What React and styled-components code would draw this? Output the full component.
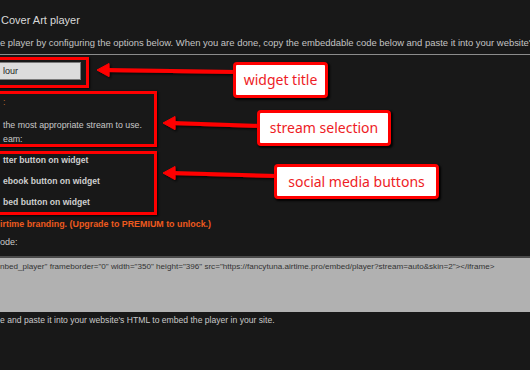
import styled, { createGlobalStyle } from "styled-components";

const GlobalStyle = createGlobalStyle`
    html, body {
        margin: 0;
        padding: 0;
        background: #181818;
        overflow: hidden;
    }
    body {
        font-family: "Liberation Sans", Arial, sans-serif;
    }
`;

const streamLines = [
    { text: ":", tone: "label", gap: 2 },
    { text: " the most appropriate stream to use.", tone: "plain", gap: 11 },
    { text: "eam:", tone: "plain", gap: 2 },
];

const socialItems = [
    "tter button on widget",
    "ebook button on widget",
    "bed button on widget",
];

const callouts = [
    { text: "widget title", left: 233, top: 62, width: 95, height: 36 },
    { text: "stream selection", left: 257, top: 110, width: 134, height: 36 },
    { text: "social media buttons", left: 274, top: 164, width: 165, height: 35 },
];

const arrows = [
    { tipX: 97, tipY: 70, endX: 236, endY: 72 },
    { tipX: 163, tipY: 123, endX: 260, endY: 126 },
    { tipX: 163, tipY: 173, endX: 276, endY: 176 },
];

const App = () => {
    const code = 'nbed_player" frameborder="0" width="350" height="396" src="https://fancytuna.airtime.pro/embed/player?stream=auto&skin=2"></iframe>';

    return (
        <Page>
            <GlobalStyle />
            <Content>
                <Title>Cover Art player</Title>
                <Intro>e player by configuring the options below. When you are done, copy the embeddable code below and paste it into your website's</Intro>
                <Rule />

                <Highlight $width={109} $height={25} $top={2}>
                    <TitleInput readOnly value="lour" />
                </Highlight>

                <Highlight $width={177} $height={50} $top={3}>
                    {streamLines.map((line, index) => (
                        <StreamLine key={index} $tone={line.tone} $gap={line.gap}>
                            {line.text}
                        </StreamLine>
                    ))}
                </Highlight>

                <Highlight $width={177} $height={58} $top={4}>
                    {socialItems.map((item) => (
                        <CheckRow key={item}>{item}</CheckRow>
                    ))}
                </Highlight>

                <Premium>irtime branding. (Upgrade to PREMIUM to unlock.)</Premium>
                <CodeLabel>ode:</CodeLabel>
                <CodeBox readOnly wrap="off" value={code} />
                <Hint>e and paste it into your website's HTML to embed the player in your site.</Hint>
            </Content>

            <Arrows width="530" height="370" viewBox="0 0 530 370">
                <defs>
                    <filter id="shade" x="-10%" y="-50%" width="130%" height="200%">
                        <feDropShadow dx="1.5" dy="1.5" stdDeviation="0.8" floodColor="#000" floodOpacity="0.8" />
                    </filter>
                </defs>
                {arrows.map((a, index) => (
                    <g key={index} filter="url(#shade)" fill="#ff0000" stroke="#ff0000">
                        <line x1={a.tipX + 9} y1={a.tipY} x2={a.endX} y2={a.endY} strokeWidth="4" strokeLinecap="round" />
                        <polygon points={`${a.tipX},${a.tipY} ${a.tipX + 12},${a.tipY - 6.5} ${a.tipX + 12},${a.tipY + 6.5}`} strokeWidth="1" strokeLinejoin="round" />
                    </g>
                ))}
            </Arrows>

            {callouts.map((c) => (
                <Callout key={c.text} style={{ left: c.left, top: c.top, width: c.width, height: c.height }}>
                    {c.text}
                </Callout>
            ))}
        </Page>
    );
};

export default App;

const Page = styled.div`
    position: relative;
    width: 530px;
    height: 370px;
    overflow: hidden;
    background: #181818;
`;

const Content = styled.div`
    display: flex;
    flex-direction: column;
    align-items: flex-start;
`;

const Title = styled.div`
    margin-top: 13px;
    padding-left: 1px;
    font-size: 11px;
    line-height: 14px;
    color: #d8d8d8;
`;

const Intro = styled.div`
    margin-top: 10px;
    font-size: 9.45px;
    line-height: 12px;
    color: #c4c4c4;
    white-space: nowrap;
`;

const Rule = styled.div`
    align-self: stretch;
    margin-top: 5px;
    height: 0;
    border-top: 1px solid #8c8c8c;
`;

const Highlight = styled.div`
    box-sizing: border-box;
    margin-top: ${props => props.$top}px;
    margin-left: -20px;
    width: ${props => props.$width}px;
    height: ${props => props.$height + 6}px;
    border: 3px solid #ff0000;
    box-shadow: 1px 1px 2px rgba(0, 0, 0, 0.9);
    display: flex;
    flex-direction: column;
    align-items: flex-start;
    padding-left: 20px;
`;

const TitleInput = styled.input`
    box-sizing: border-box;
    margin: 2px 0 0 -14px;
    width: 92px;
    height: 18px;
    padding: 0 0 0 13px;
    border: 1px solid #7a7a7a;
    background: #dcdcdc;
    color: #222;
    font-family: "Liberation Sans", Arial, sans-serif;
    font-size: 9px;
    outline: none;
`;

const StreamLine = styled.div`
    margin-top: ${props => props.$gap}px;
    font-size: 8.8px;
    line-height: 12px;
    white-space: nowrap;
    color: ${props => props.$tone === 'label' ? '#b8652a' : '#c8c8c8'};
`;

const CheckRow = styled.div`
    font-size: 8.6px;
    font-weight: 700;
    line-height: 12px;
    color: #cfcfcf;
    white-space: nowrap;
    margin-bottom: 9px;

    &:last-child {
        margin-bottom: 0;
    }
`;

const Premium = styled.div`
    margin-top: 3px;
    font-size: 8.9px;
    font-weight: 700;
    line-height: 12px;
    color: #ee5a1e;
    white-space: nowrap;
`;

const CodeLabel = styled.div`
    margin-top: 6px;
    font-size: 9px;
    line-height: 12px;
    color: #cacaca;
`;

const CodeBox = styled.textarea`
    box-sizing: border-box;
    align-self: stretch;
    margin: 8px 0 0 0;
    height: 56px;
    padding: 3px 0 0 0;
    border: none;
    border-top: 2px solid #4a4a4a;
    background: #b1b1b1;
    color: #333;
    font-family: "Liberation Sans", Arial, sans-serif;
    font-size: 8.1px;
    line-height: 12px;
    resize: none;
    overflow: hidden;
    outline: none;
    white-space: pre;
`;

const Hint = styled.div`
    margin-top: 2px;
    font-size: 8.6px;
    line-height: 12px;
    color: #c8c8c8;
    white-space: nowrap;
`;

const Arrows = styled.svg`
    position: absolute;
    left: 0;
    top: 0;
    pointer-events: none;
`;

const Callout = styled.div`
    position: absolute;
    box-sizing: border-box;
    display: flex;
    align-items: center;
    justify-content: center;
    background: #fff;
    border: 3px solid #ff0000;
    border-radius: 4px;
    box-shadow: 1.5px 1.5px 2px rgba(0, 0, 0, 0.9);
    color: #ee1c25;
    font-family: "Noto Sans", "Open Sans", sans-serif;
    font-size: 14px;
    line-height: 1;
    white-space: nowrap;
`;
